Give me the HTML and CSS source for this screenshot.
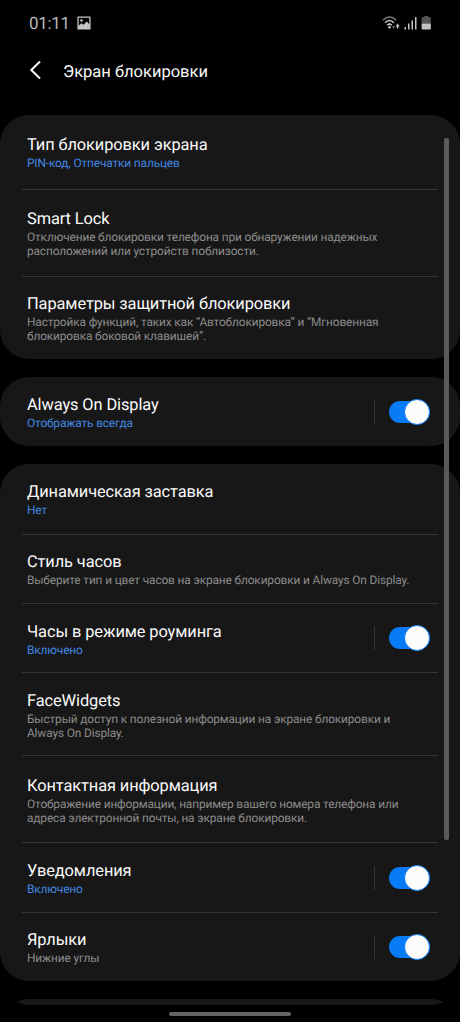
FILE: index.html
```html
<!DOCTYPE html>
<html lang="ru">
<head>
<meta charset="utf-8">
<title>Экран блокировки</title>
<link rel="stylesheet" href="styles.css">
</head>
<body>
<div class="phone">
  <header class="status">
    <span class="clock">01:11</span>
    <svg class="photo" width="14" height="14" viewBox="0 0 14 14"><path fill="#c4c4c4" fill-rule="evenodd" d="M1 0.5h12a.6.6 0 0 1 .6.6v11.8a.6.6 0 0 1-.6.6H1a.6.6 0 0 1-.6-.6V1.100a.6.6 0 0 1 .6-.6zM1.700 1.800v8l2.600-2.500 2.200 1.400 3.300-3.100 2.500 2.700V1.800z"/><circle cx="4.500" cy="4.500" r="1.300" fill="#c4c4c4"/></svg>
    <svg class="signals" width="50" height="16" viewBox="0 0 50 16">
      <g fill="none" stroke="#c4c4c4" stroke-width="1.500"><path stroke="#777" d="M0.800 5.200Q7.500-1.200 14.200 5.200"/><path d="M3 7.800Q7.500 3.200 12 7.800"/><path d="M5.200 10.200Q7.500 8 9.800 10.200"/></g>
      <circle cx="7.500" cy="12.300" r="1.300" fill="#c4c4c4"/>
      <path fill="#666" d="M10 11h3l-1.500 3z"/><path fill="#c4c4c4" d="M15.600 8.600l2.100 3h-1.400v2h-1.400v-2h-1.400z"/>
      <path fill="#c4c4c4" d="M22.500 12h1.500v2.500h-1.500zM26 8.500h1.500v6H26zM29.500 5.500h1.500v9h-1.500zM33 2h1.500v12.500H33z"/>
      <path fill="#555" d="M42.300 1h3.800v1.300h2.700V8.500h-9.200V2.300h2.700z"/><path fill="#c4c4c4" d="M39.600 8.500h9.200v5.200a.8.8 0 0 1-.8.8h-7.600a.8.8 0 0 1-.8-.8z"/>
    </svg>
  </header>
  <nav class="appbar">
    <svg width="12" height="20" viewBox="0 0 12 20"><path fill="none" stroke="#fafafa" stroke-width="2" d="M11 1.500L2.300 10l8.700 8.500"/></svg>
    <h1 class="heading">Экран блокировки</h1>
  </nav>
  <main class="list">
    <section class="card">
      <div class="row first"><div class="text"><div class="title">Тип блокировки экрана</div><div class="sub blue">PIN-код, Отпечатки пальцев</div></div></div>
      <div class="row tall"><div class="text"><div class="title">Smart Lock</div><div class="sub">Отключение блокировки телефона при обнаружении надежных<br>расположений или устройств поблизости.</div></div></div>
      <div class="row end"><div class="text"><div class="title">Параметры защитной блокировки</div><div class="sub">Настройка функций, таких как “Автоблокировка” и “Мгновенная<br>блокировка боковой клавишей”.</div></div></div>
    </section>
    <section class="card">
      <div class="row"><div class="text"><div class="title">Always On Display</div><div class="sub blue">Отображать всегда</div></div><div class="control"><span class="switch"></span></div></div>
    </section>
    <section class="card">
      <div class="row saver"><div class="text"><div class="title">Динамическая заставка</div><div class="sub blue">Нет</div></div></div>
      <div class="row"><div class="text"><div class="title">Стиль часов</div><div class="sub">Выберите тип и цвет часов на экране блокировки и Always On Display.</div></div></div>
      <div class="row"><div class="text"><div class="title">Часы в режиме роуминга</div><div class="sub blue">Включено</div></div><div class="control"><span class="switch"></span></div></div>
      <div class="row medium"><div class="text"><div class="title">FaceWidgets</div><div class="sub">Быстрый доступ к полезной информации на экране блокировки и<br>Always On Display.</div></div></div>
      <div class="row tall"><div class="text"><div class="title">Контактная информация</div><div class="sub">Отображение информации, например вашего номера телефона или<br>адреса электронной почты, на экране блокировки.</div></div></div>
      <div class="row"><div class="text"><div class="title">Уведомления</div><div class="sub blue">Включено</div></div><div class="control"><span class="switch"></span></div></div>
      <div class="row shortcuts"><div class="text"><div class="title">Ярлыки</div><div class="sub">Нижние углы</div></div><div class="control"><span class="switch"></span></div></div>
    </section>
    <section class="card next"></section>
  </main>
  <footer class="gesture"><span class="handle"></span></footer>
  <div class="scrollbar"></div>
</div>
</body>
</html>
```
FILE: styles.css
```css
* { box-sizing: border-box; }
body { margin: 0; background: #000; font-family: Roboto, "Liberation Sans", sans-serif; text-rendering: geometricPrecision; }
.phone { position: relative; width: 460px; height: 1022px; display: flex; flex-direction: column; overflow: hidden; background: #000; }
.status { height: 46px; flex: none; display: flex; align-items: center; padding: 0 28px 0 29px; color: #b8b8b8; }
.clock { font-size: 17px; letter-spacing: -0.3px; width: 48px; padding-top: 1px; }
.signals { margin-left: auto; }
.appbar { height: 69px; flex: none; display: flex; align-items: flex-start; gap: 22px; padding: 14px 0 0 29px; }
.heading { margin: 0; font-size: 16.5px; line-height: 25px; font-weight: 400; color: #fafafa; }
.list { height: 890px; flex: none; overflow: hidden; display: flex; flex-direction: column; gap: 18px; border-radius: 0 0 29px 29px; }
.card { flex: none; border-radius: 29px; background: #171717; }
.row { height: 69.4px; display: flex; align-items: center; justify-content: space-between; margin: 0 22px; padding: 0 8px 0 5px; border-bottom: 1px solid #363636; }
.row:last-child { height: 69px; border-bottom: 0; }
.row.saver { height: 70.6px; }
.row.shortcuts { height: 68.2px; }
.first { height: 74.5px; }
.tall { height: 87px; }
.medium { height: 83px; }
.row.end { height: 82.5px; }
.text { white-space: nowrap; padding-top: 2px; }
.title { font-size: 16.4px; letter-spacing: -0.1px; line-height: 21px; color: #fafafa; }
.sub { font-size: 11.9px; letter-spacing: -0.14px; line-height: 14px; color: #8c8c8c; }
.blue { color: #4288e0; }
.control { flex: none; display: flex; align-items: center; gap: 14px; }
.control::before { content: ""; width: 1px; height: 24px; background: #353535; }
.switch { display: flex; align-items: center; justify-content: flex-end; width: 41px; height: 22px; border-radius: 11px; background: #087cf7; }
.switch::after { content: ""; flex: none; width: 24px; height: 24px; border: 1px solid #087cf7; border-radius: 50%; background: #fcfcfc; }
.next { height: 70px; }
.gesture { flex: 1; display: flex; justify-content: center; padding-top: 7px; }
.handle { width: 122px; height: 4px; border-radius: 2px; background: #656565; }
.scrollbar { position: absolute; top: 138px; left: 444px; width: 5px; height: 702px; border-radius: 2px; background: #5a5a5a; }
```
